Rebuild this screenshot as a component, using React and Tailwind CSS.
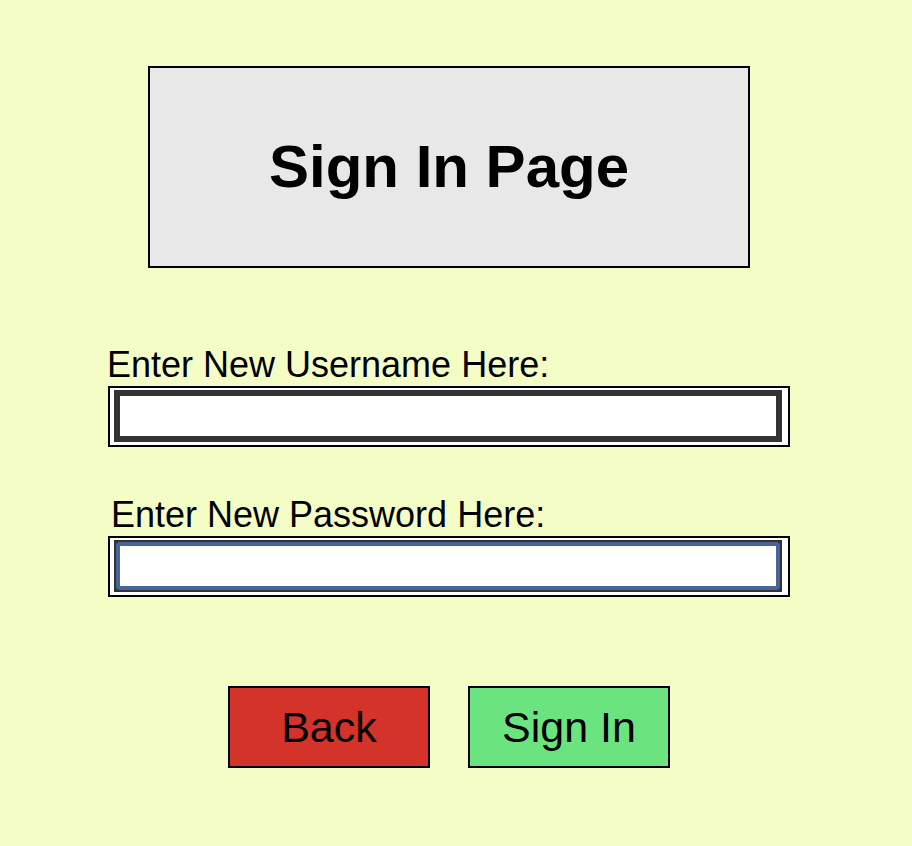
import React from "react";

// Sign in page
const App = () => {
  return (
    <div className="min-h-screen w-full bg-[#f4fdc6] font-['Liberation_Sans',Arial,sans-serif] text-black flex flex-col pb-[78px]">
      <div className="mt-[66px] ml-[148px] w-[602px] h-[202px] border-2 border-black bg-[#e8e8e8] flex items-center justify-center">
        <h1 className="text-[60px] font-bold leading-none">Sign In Page</h1>
      </div>

      <label className="mt-[76px] ml-[107px] text-[36px] leading-[41px]">
        Enter New Username Here:
      </label>
      <div className="mt-px ml-[108px] w-[682px] border-2 border-black bg-white pt-[2px] pb-[3px] pl-[4px] pr-[6px]">
        <input
          type="text"
          className="block w-[668px] h-[52px] border-[6px] border-[#333333] bg-white outline-none"
        />
      </div>

      <label className="mt-[47px] ml-[111px] text-[36px] leading-[41px]">
        Enter New Password Here:
      </label>
      <div className="mt-px ml-[108px] w-[682px] border-2 border-black bg-white pt-[2px] pb-[3px] pl-[4px] pr-[6px]">
        <div className="w-[668px] h-[52px] bg-[#333333] p-[2px]">
          <input
            type="password"
            className="block w-full h-full border-4 border-[#47659b] rounded-[4px] bg-white outline-none"
          />
        </div>
      </div>

      <div className="mt-[89px] ml-[228px] flex gap-[38px]">
        <button className="w-[202px] h-[82px] border-2 border-black bg-[#d33328] text-[43px] leading-none flex items-center justify-center">
          Back
        </button>
        <button className="w-[202px] h-[82px] border-2 border-black bg-[#6be47f] text-[43px] leading-none flex items-center justify-center">
          Sign In
        </button>
      </div>
    </div>
  );
};

export default App;
